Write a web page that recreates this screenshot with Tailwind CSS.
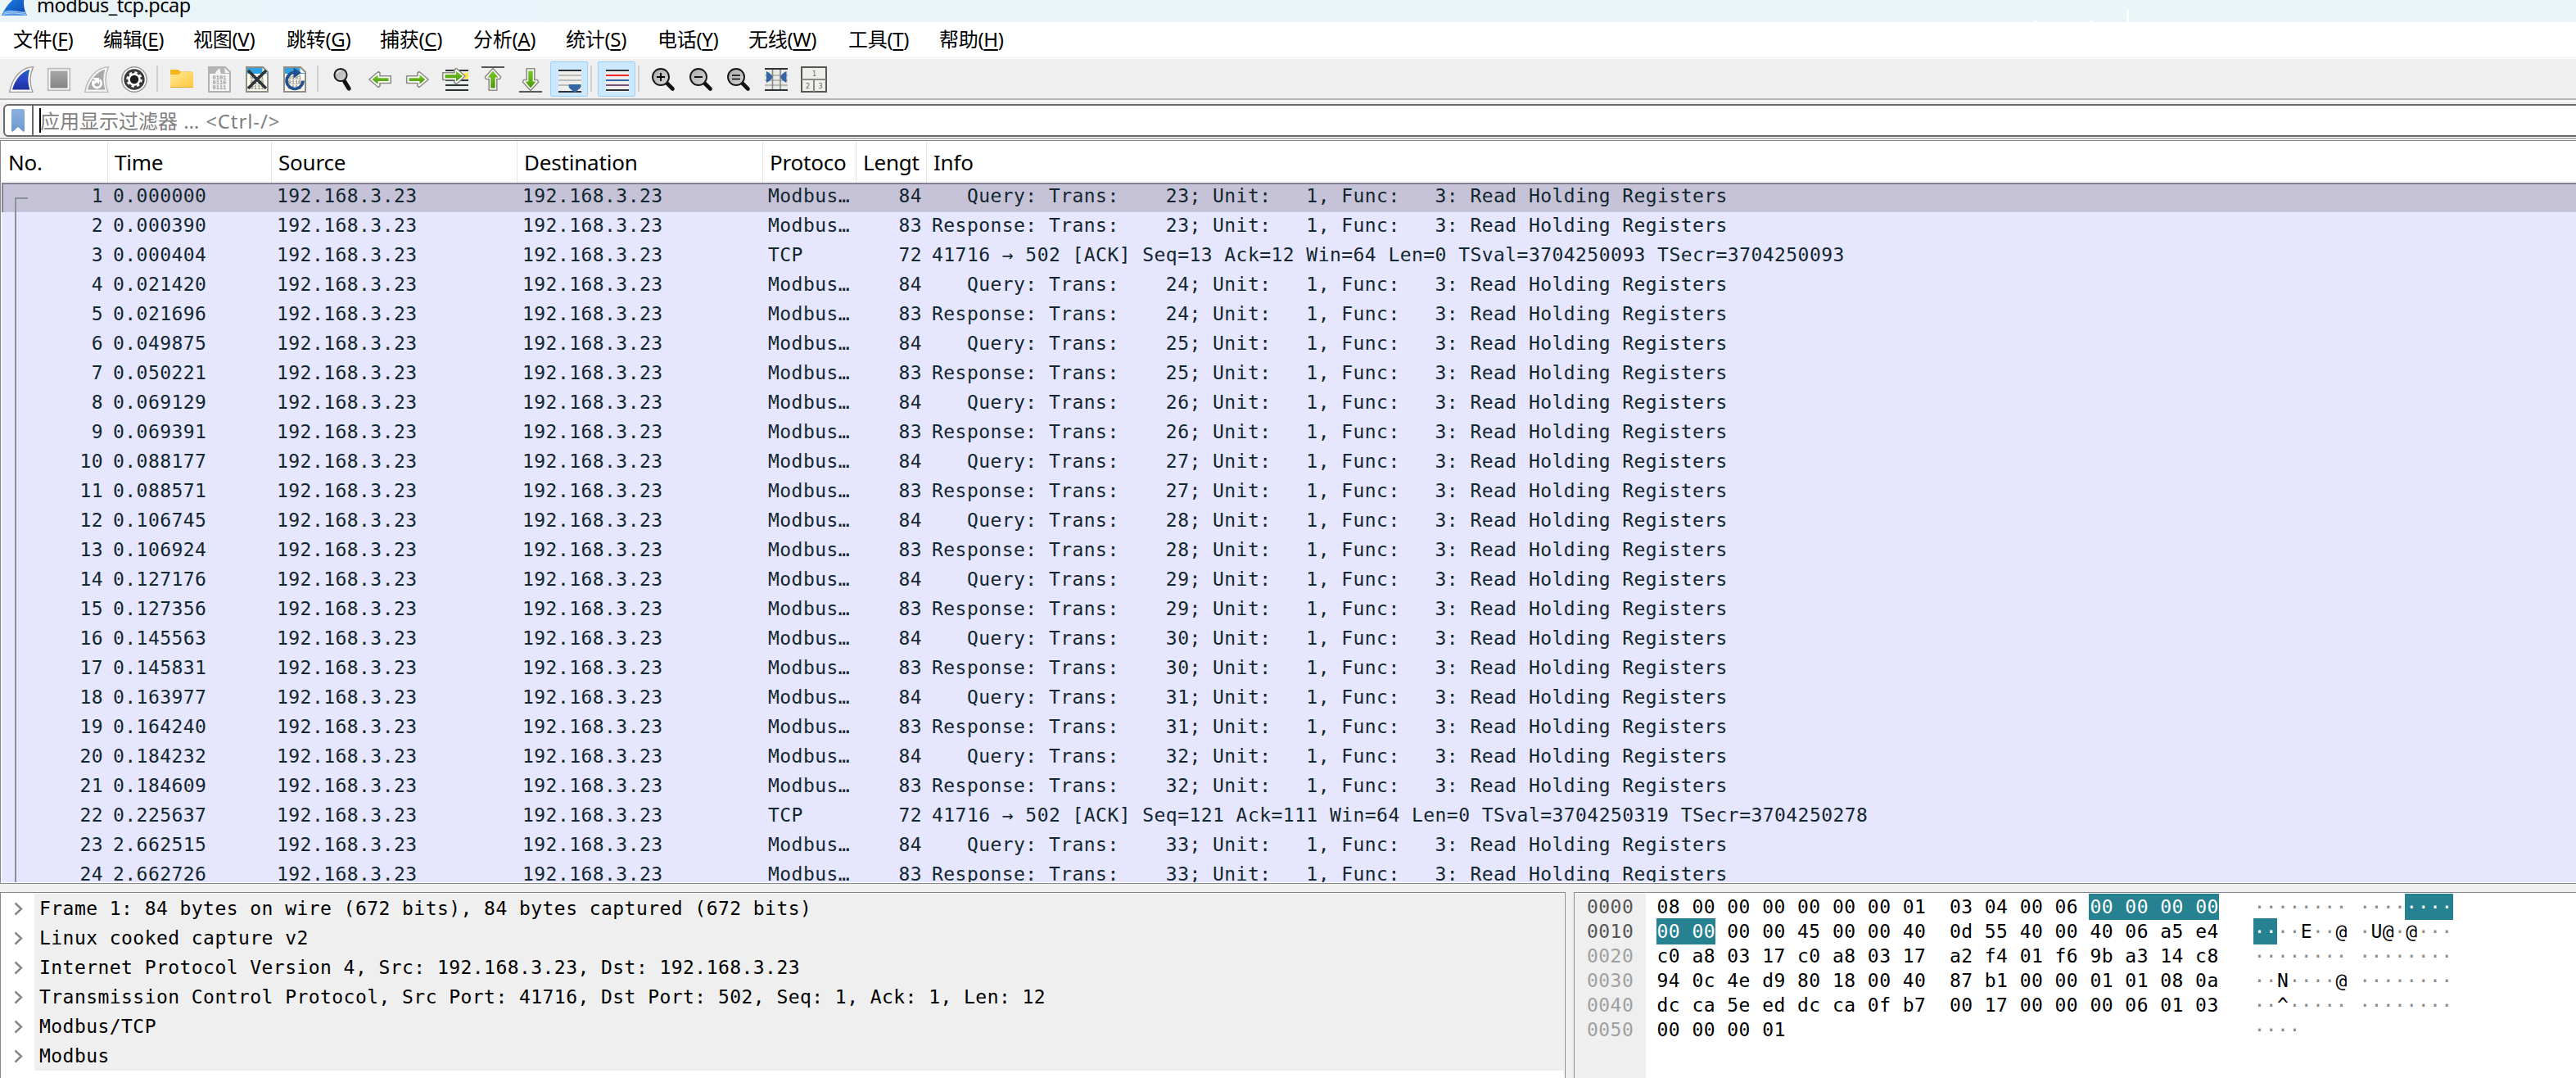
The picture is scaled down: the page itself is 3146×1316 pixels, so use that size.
<!DOCTYPE html>
<html lang="zh-CN">
<head>
<meta charset="utf-8">
<title>modbus_tcp.pcap</title>
<script src="https://cdn.jsdelivr.net/npm/@tailwindcss/browser@4"></script>
</head>
<body class="w-[3146px] h-[1316px] overflow-hidden bg-[#efefef] text-black flex flex-col font-['Noto_Sans','Noto_Sans_CJK_SC',sans-serif]">

<!-- Title bar -->
<header class="h-[27px] shrink-0 overflow-hidden bg-[linear-gradient(90deg,#eaf5f7_0,#eaf5f7_200px,#ebf3fc_430px,#ebf3fc_570px,#eaf5f7_760px)] flex items-start">
  <svg class="w-[45px] h-[27px] shrink-0" viewBox="0 0 45 27">
    <defs><linearGradient id="fin" x1="0" y1="0" x2="1" y2="1"><stop offset="0" stop-color="#1d8bea"/><stop offset="1" stop-color="#0b3fae"/></linearGradient></defs>
    <path d="M2 19C6 10 12 2 20-4H30C28 3 29 12 33 19Z" fill="url(#fin)"/>
    <path d="M5 14C14 10 22 16 31 14L33 19H2Z" fill="#4f93e6"/>
    <path d="M5 15.500Q15 12 31 16M4 17.500Q15 14 32 18" stroke="#b9d6f7" fill="none"/>
  </svg>
  <div class="text-[23.500px] leading-[34px] h-[34px] -mt-[11px] tracking-[-0.500px] whitespace-pre" id="title">modbus_tcp.pcap</div>
  <svg class="w-[130px] h-[27px] ml-auto mr-[536px]" viewBox="2480 0 130 27"><path d="M2597 12H2600V27H2597ZM2483 25H2488V27H2483ZM2551 25H2556V27H2551Z" fill="#fbffff"/></svg>
</header>

<!-- Menu -->
<nav id="menu" class="h-[43px] shrink-0 bg-white flex items-center pl-[16px] text-[24px] tracking-[-0.3px] leading-[41px] pb-[2px] font-['Noto_Sans','Noto_Sans_CJK_SC',sans-serif]"></nav>
<div class="h-[2px] shrink-0 bg-white border-t border-[#efefef]"></div>

<!-- Toolbar -->
<div class="h-[48px] shrink-0 flex pl-[3px]">
  <svg class="w-0 h-0" viewBox="0 0 1 1">
    <defs>
      <linearGradient id="blue" x1="0" y1="0" x2="0" y2="1"><stop offset="0" stop-color="#1f5fc0"/><stop offset=".5" stop-color="#2b45c4"/><stop offset="1" stop-color="#1d2f9c"/></linearGradient>
      <linearGradient id="grey" x1="0" y1="0" x2="0" y2="1"><stop offset="0" stop-color="#a6a6a6"/><stop offset="1" stop-color="#858585"/></linearGradient>
      <linearGradient id="lens" x1="0" y1="0" x2="1" y2="1"><stop offset="0" stop-color="#a9a9a9"/><stop offset="1" stop-color="#d8d8d8"/></linearGradient>
      <linearGradient id="green" x1="0" y1="0" x2="0" y2="1"><stop offset="0" stop-color="#7cc72c"/><stop offset="1" stop-color="#459a06"/></linearGradient>
      <linearGradient id="folder" x1="0" y1="0" x2="1" y2="1"><stop offset="0" stop-color="#ffe797"/><stop offset="1" stop-color="#ffc93c"/></linearGradient>
    </defs>
  </svg>
  <svg class="w-[46px] h-[48px]" viewBox="3 72 46 48">
    <path d="M11.700 112.400C15 94 27 82 40.500 81.600C35.500 93 36.500 104 40 112.400Z" fill="#fff" stroke="#9b9b9b" stroke-width="1.400"/>
    <path d="M15 109.500C18.500 96.500 26.500 87.500 36.300 84.700C33.500 94 34 102 36.500 109.500Z" fill="url(#blue)"/>
  </svg>
  <svg class="w-[46px] h-[48px]" viewBox="49 72 46 48">
    <rect x="58.700" y="83.700" width="26.600" height="26.600" fill="#f6f6f6" stroke="#b5b5b5" stroke-width="1.500"/>
    <rect x="61.500" y="86.500" width="21" height="21" fill="url(#grey)"/>
  </svg>
  <svg class="w-[46px] h-[48px]" viewBox="95 72 46 48">
    <path d="M103.700 112.400C107 94 119 82 132.500 81.600C127.500 93 128.500 104 132 112.400Z" fill="#f6f6f6" stroke="#b8b8b8" stroke-width="1.400"/>
    <path d="M107 109.500C110.500 96.500 118.500 87.500 128.300 84.700C125.500 94 126 102 128.500 109.500Z" fill="#a8a8a8"/>
    <path d="M114.500 98.500A5.200 5.200 0 1 0 121.500 97.500" fill="none" stroke="#fff" stroke-width="2.800"/>
    <path d="M113 95H121V103L118.500 100.500L115.500 103L113.500 101L116 98Z" fill="#fff"/>
  </svg>
  <svg class="w-[46px] h-[48px]" viewBox="141 72 46 48">
    <circle cx="164" cy="97" r="15.200" fill="#fff" stroke="#999" stroke-width="1.500"/>
    <circle cx="164" cy="97" r="12.700" fill="#3a3a3a"/>
    <circle cx="164" cy="97" r="6.500" fill="#1c1c1c" stroke="#fff" stroke-width="2.600"/>
    <circle cx="164" cy="97" r="8.500" fill="none" stroke="#fff" stroke-width="2.400" stroke-dasharray="3.400 3.276"/>
  </svg>
  <div class="w-[12px] flex items-center pl-[4px]"><div class="w-[2px] h-[32px] bg-[#cfcfcf]"></div></div>
  <svg class="w-[46px] h-[48px]" viewBox="199 72 46 48">
    <path d="M208 85.500Q208 85 209 85H217.500L220.500 87.500H234Q236 87.500 236 89V93H208Z" fill="#f4b617"/>
    <path d="M208 91H218L221.500 88H235Q236 88 236 89V106Q236 107 235 107H209Q208 107 208 106Z" fill="url(#folder)"/>
    <path d="M208 106.500H236" stroke="#e2a91e"/>
  </svg>
  <svg class="w-[46px] h-[48px] font-['Liberation_Mono',monospace]" viewBox="245 72 46 48">
    <path d="M255 82H275L281 88V112H255Z" fill="#f4f4f4" stroke="#b2b2b2" stroke-width="2"/>
    <path d="M256 83H274.500V89H280V90H256Z" fill="#b5b5b5"/><path d="M263 90Q264 85 269 83.500Q268 87 270 90Z" fill="#f4f4f4"/>
    <g fill="#9d9d9d" font-size="7" font-weight="700"><text x="259.500" y="97">0101</text><text x="259.500" y="103">0110</text><text x="259.500" y="109">0111</text></g>
  </svg>
  <svg class="w-[46px] h-[48px] font-['Liberation_Mono',monospace]" viewBox="291 72 46 48">
    <path d="M301 82H321L327 88V112H301Z" fill="#fdfdf0" stroke="#8f8f88" stroke-width="2"/>
    <path d="M302 83H320.500V89H326V90H302Z" fill="#2ea3e0"/>
    <g fill="#8a8a84" font-size="7" font-weight="700"><text x="305.500" y="97">0101</text><text x="305.500" y="103">0110</text><text x="305.500" y="109">0111</text></g>
    <path d="M303 86L325 108M325 86L303 108" stroke="#2c3437" stroke-width="3.600"/>
  </svg>
  <svg class="w-[46px] h-[48px] font-['Liberation_Mono',monospace]" viewBox="337 72 46 48">
    <path d="M347 82H367L373 88V112H347Z" fill="#fdfdf0" stroke="#8f8f88" stroke-width="2"/>
    <path d="M348 83H366.500V89H372V90H348Z" fill="#2ea3e0"/>
    <g fill="#8a8a84" font-size="7" font-weight="700"><text x="351.500" y="97">0101</text><text x="351.500" y="103">0110</text><text x="351.500" y="109">0111</text></g>
    <path d="M360 88.500A10 10 0 1 0 370 98.500" fill="none" stroke="#234f8e" stroke-width="3.600"/>
    <path d="M358.500 82.500L368 89L358.500 95.500Z" fill="#234f8e"/>
  </svg>
  <div class="w-[12px] flex items-center pl-[4px]"><div class="w-[2px] h-[32px] bg-[#cfcfcf]"></div></div>
  <svg class="w-[46px] h-[48px]" viewBox="395 72 46 48">
    <path d="M420.500 99L426 108" stroke="#111" stroke-width="5.200" stroke-linecap="round"/>
    <circle cx="416" cy="91.500" r="7.600" fill="url(#lens)" stroke="#1a1a1a" stroke-width="2"/>
    <path d="M411.500 90Q412.500 86.500 416.500 86.500" stroke="#eee" stroke-width="1.500" fill="none"/>
  </svg>
  <svg class="w-[46px] h-[48px]" viewBox="441 72 46 48">
    <path d="M450.800 97L462 87.500L464 89V92.700H477.300V101.500H464V105L462 106.500Z" fill="#fff" stroke="#8c8c86" stroke-width="1.600" stroke-linejoin="round"/>
    <path d="M454.500 97L461.500 91.300V95.200H474.500V99H461.500V102.700Z" fill="url(#green)"/>
  </svg>
  <svg class="w-[46px] h-[48px]" viewBox="487 72 46 48">
    <path d="M523.200 97L512 87.500L510 89V92.700H496.700V101.500H510V105L512 106.500Z" fill="#fff" stroke="#8c8c86" stroke-width="1.600" stroke-linejoin="round"/>
    <path d="M519.500 97L512.500 91.300V95.200H499.500V99H512.500V102.700Z" fill="url(#green)"/>
  </svg>
  <svg class="w-[46px] h-[48px]" viewBox="533 72 46 48">
    <rect x="544" y="87" width="28" height="23" fill="#e9efec"/>
    <rect x="562" y="89" width="10" height="7" fill="#fce94f"/>
    <path d="M544 86H572M544 98H572M544 104H572M544 110H572" stroke="#2e3436" stroke-width="2"/>
    <path d="M568 93L557.500 83.500L555 85V88.700H540.700V97.500H555V101L557.500 102.500Z" fill="#fff" stroke="#8c8c86" stroke-width="1.600" stroke-linejoin="round"/>
    <path d="M565 93L557 86.800V91H543.500V95.300H557V99.200Z" fill="url(#green)"/>
  </svg>
  <svg class="w-[46px] h-[48px]" viewBox="579 72 46 48">
    <path d="M588 82H616" stroke="#555753" stroke-width="2"/>
    <path d="M602 83.500L592.300 94L593.500 96.500H597.200V110.300H606.800V96.500H610.500L611.700 94Z" fill="#fff" stroke="#8c8c86" stroke-width="1.600" stroke-linejoin="round"/>
    <path d="M602 86.500L595.500 94.500H599.300V107.500H604.700V94.500H608.500Z" fill="url(#green)"/>
  </svg>
  <svg class="w-[46px] h-[48px]" viewBox="625 72 46 48">
    <path d="M634 112H662" stroke="#555753" stroke-width="2"/>
    <path d="M648 110.500L638.300 100L639.500 97.500H643.200V83.700H652.800V97.500H656.500L657.700 100Z" fill="#fff" stroke="#8c8c86" stroke-width="1.600" stroke-linejoin="round"/>
    <path d="M648 107.500L641.500 99.500H645.300V86.500H650.700V99.500H654.500Z" fill="url(#green)"/>
  </svg>
  <svg class="w-[47px] h-[48px]" viewBox="671 72 47 48">
    <rect x="672.500" y="75.500" width="45" height="42" rx="1.500" fill="#cce8ff" stroke="#99d1ff"/>
    <rect x="682" y="86" width="28" height="26" fill="#eeeeec"/>
    <path d="M682 92H710M682 98H710M682 104H710" stroke="#babdb6" stroke-width="2"/>
    <path d="M682 86H710M682 112H710" stroke="#2e3436" stroke-width="2"/>
    <path d="M695 103H709Q710.500 106 707.500 108.500L702 113L696.500 108.500Q693.500 106 695 103Z" fill="#3465a4"/>
  </svg>
  <div class="w-[12px] flex items-center pl-[3px]"><div class="w-[2px] h-[32px] bg-[#cfcfcf]"></div></div>
  <svg class="w-[46px] h-[48px]" viewBox="730 72 46 48">
    <rect x="730.500" y="75.500" width="45" height="42" rx="1.500" fill="#cce8ff" stroke="#99d1ff"/>
    <rect x="740" y="86" width="28" height="26" fill="#eeeeec"/>
    <path d="M740 86H768M740 110H768" stroke="#2e3436" stroke-width="2"/>
    <path d="M740 92H768" stroke="#ef2929" stroke-width="2"/><path d="M740 98H768" stroke="#3465a4" stroke-width="2"/><path d="M740 104H768" stroke="#75507b" stroke-width="2"/>
  </svg>
  <div class="w-[11px] flex items-center pl-[3px]"><div class="w-[2px] h-[32px] bg-[#cfcfcf]"></div></div>
  <svg class="w-[46px] h-[48px]" viewBox="787 72 46 48">
    <path d="M814 101L821.500 108.500" stroke="#111" stroke-width="4.600" stroke-linecap="round"/>
    <circle cx="807" cy="94" r="10" fill="url(#lens)" stroke="#151515" stroke-width="1.900"/>
    <path d="M802 94H812M807 89V99" stroke="#000" stroke-width="1.800"/>
  </svg>
  <svg class="w-[46px] h-[48px]" viewBox="833 72 46 48">
    <path d="M860 101L867.500 108.500" stroke="#111" stroke-width="4.600" stroke-linecap="round"/>
    <circle cx="853" cy="94" r="10" fill="url(#lens)" stroke="#151515" stroke-width="1.900"/>
    <path d="M848 94H858" stroke="#000" stroke-width="1.800"/>
  </svg>
  <svg class="w-[46px] h-[48px]" viewBox="879 72 46 48">
    <path d="M906 101L913.500 108.500" stroke="#111" stroke-width="4.600" stroke-linecap="round"/>
    <circle cx="899" cy="94" r="10" fill="url(#lens)" stroke="#151515" stroke-width="1.900"/>
    <path d="M894 92H904M894 96.500H904" stroke="#000" stroke-width="1.700"/>
  </svg>
  <svg class="w-[46px] h-[48px]" viewBox="925 72 46 48">
    <rect x="934" y="84" width="28" height="26" fill="#e9e9e6"/>
    <path d="M934 92H962M934 98H962M934 104H962" stroke="#babdb6" stroke-width="2"/>
    <path d="M934 84H962M934 110H962" stroke="#2e3436" stroke-width="2"/>
    <path d="M943.500 85V109M953 85V109" stroke="#888a85" stroke-width="1.600"/>
    <path d="M936 87Q942 90 943.500 94Q942 98 936 101ZM960.500 87Q954.500 90 953 94Q954.500 98 960.500 101Z" fill="#3465a4"/>
  </svg>
  <svg class="w-[46px] h-[48px] font-['DejaVu_Sans',sans-serif]" viewBox="971 72 46 48">
    <rect x="979" y="82" width="30" height="30" fill="#eeeeec" stroke="#555753" stroke-width="2"/>
    <path d="M979 97H1009M994 97V112" stroke="#888a85" stroke-width="2"/>
    <g fill="#666" font-size="8" text-anchor="middle"><text x="994.500" y="92.500">1</text><text x="986.500" y="108">2</text><text x="1002" y="108">3</text></g>
  </svg>
</div>
<div class="h-[4px] shrink-0 bg-[#efefef] border-t-2 border-[#b7b7b7]"><div class="h-[2px] border-b border-white"></div></div>

<!-- Display filter -->
<div class="h-[43px] shrink-0 pt-[3px] pl-[4px]">
  <div class="h-[40px] w-[3160px] bg-white border-2 border-[#696969] rounded-[6px] flex items-center">
    <div class="w-[33px] h-full border-r-2 border-[#696969] box-content flex items-center">
      <svg class="w-[16px] h-[28px] ml-[8px]" viewBox="0 0 16 28"><defs><linearGradient id="bm" x1="0" y1="0" x2="0" y2="1"><stop offset="0" stop-color="#8cb1db"/><stop offset="1" stop-color="#6a99cf"/></linearGradient></defs><path d="M0 1.500Q0 0 1.500 0H14.500Q16 0 16 1.500V27L14.500 28L8 22L1.500 28L0 27Z" fill="url(#bm)"/></svg>
    </div>
    <div class="ml-[7px] w-[2px] h-[30px] bg-black"></div>
    <div id="filter" class="-ml-[1px] text-[24px] leading-[36px] pt-px text-[#808080] whitespace-pre">应用显示过滤器<span class="tracking-[0.900px]"> … &lt;Ctrl-/&gt;</span></div>
  </div>
</div>
<div class="h-[4px] shrink-0 bg-white border-b border-white"><div class="mt-[1px] h-[2px] bg-[#b3b3b3]"></div></div>

<!-- Packet list -->
<section class="h-[908px] shrink-0 border-t border-b border-l border-[#828790] bg-white flex flex-col">
  <div id="head" class="h-[51px] shrink-0 flex text-[26px] leading-[52px] tracking-[-0.2px] overflow-hidden"></div>
  <div class="h-[854px] ml-px relative overflow-hidden bg-[#e6e6ff] font-['DejaVu_Sans_Mono',monospace] text-[23px] tracking-[0.445px] text-[#12272e]">
    <div id="rows"></div>
    <svg class="absolute left-0 top-0 w-[40px] h-[854px]" viewBox="2 223 40 854"><path d="M34 242H19V1077" fill="none" stroke="#8a9498" stroke-width="2"/></svg>
  </div>
</section>

<!-- Lower panes -->
<div class="h-[237px] mt-[10px] shrink-0 flex">
  <section class="w-[1912px] shrink-0 border border-b-0 border-[#828790] bg-white pt-[1px] pr-[1px]">
    <div id="tree" class="font-['DejaVu_Sans_Mono',monospace] text-[23px] tracking-[0.445px]"></div>
  </section>
  <section class="ml-[10px] grow border border-b-0 border-r-0 border-[#828790] bg-white pt-[1px] pl-[1px] flex font-['DejaVu_Sans_Mono',monospace] text-[23px] tracking-[0.449px] leading-[32px] whitespace-pre">
    <div id="offs" class="w-[86px] shrink-0 h-full bg-[#efefef] pl-[14px]"></div>
    <div id="hex" class="pl-[13.500px]"></div>
  </section>
</div>

<script>
const $ = id => document.getElementById(id);

$('menu').innerHTML = [['文件','F',110],['编辑','E',110],['视图','V',114],['跳转','G',114],['捕获','C',114],['分析','A',113],['统计','S',112],['电话','Y',111],['无线','W',122],['工具','T',111],['帮助','H',111]]
  .map(([t,k,w]) => `<div class="shrink-0 whitespace-nowrap" style="width:${w}px">${t}(<span class="underline decoration-2 underline-offset-[3px]">${k}</span>)</div>`).join('');

$('head').innerHTML = [['No.',131,9],['Time',200,8],['Source',300,8],['Destination',300,8],['Protoco',114,8],['Lengt',86,8],['Info',2100,8]]
  .map(([t,w,p]) => `<div class="shrink-0 border-r border-[#e5e5e5] whitespace-nowrap" style="width:${w}px;padding-left:${p}px">${t}</div>`).join('');

const times = '0.000000 0.000390 0.000404 0.021420 0.021696 0.049875 0.050221 0.069129 0.069391 0.088177 0.088571 0.106745 0.106924 0.127176 0.127356 0.145563 0.145831 0.163977 0.164240 0.184232 0.184609 0.225637 2.662515 2.662726'.split(' ');
const acks = {
  3: '41716 → 502 [ACK] Seq=13 Ack=12 Win=64 Len=0 TSval=3704250093 TSecr=3704250093',
  22: '41716 → 502 [ACK] Seq=121 Ack=111 Win=64 Len=0 TSval=3704250319 TSecr=3704250278'
};
let n = 0;
$('rows').innerHTML = times.map((t, i) => {
  const no = i + 1, ip = '192.168.3.23';
  let proto = 'Modbus…', len, info;
  if (acks[no]) { proto = 'TCP'; len = 72; info = acks[no]; }
  else {
    const q = n % 2 === 0, tr = 23 + (n >> 1); n++;
    len = q ? 84 : 83;
    info = (q ? '   Query:' : 'Response:') + ` Trans:    ${tr}; Unit:   1, Func:   3: Read Holding Registers`;
  }
  const cls = no === 1 ? 'bg-[#c6c3d9] shadow-[inset_2px_2px_0_#858195]' : '';
  return `<div class="h-[36px] leading-[32px] flex whitespace-pre ${cls}"><div class="w-[124px] text-right">${no}</div><div class="w-[200px] pl-[12px]">${t}</div><div class="w-[300px] pl-[12px]">${ip}</div><div class="w-[300px] pl-[12px]">${ip}</div><div class="w-[114px] pl-[12px]">${proto}</div><div class="w-[86px] text-right">${len}</div><div class="pl-[12px]">${info}</div></div>`;
}).join('');

$('tree').innerHTML = ['Frame 1: 84 bytes on wire (672 bits), 84 bytes captured (672 bits)','Linux cooked capture v2','Internet Protocol Version 4, Src: 192.168.3.23, Dst: 192.168.3.23','Transmission Control Protocol, Src Port: 41716, Dst Port: 502, Seq: 1, Ack: 1, Len: 12','Modbus/TCP','Modbus']
  .map(t => `<div class="h-[36px] leading-[37px] flex whitespace-pre"><svg class="w-[41px] h-[36px] shrink-0" viewBox="0 0 41 36"><path d="M17.500 11.500L25 18.500L17.500 25.500" fill="none" stroke="#858585" stroke-width="2.400"/></svg><div class="grow bg-[#efefef] pl-[6px]">${t}</div></div>`).join('');

$('offs').innerHTML = ['0000','0010','0020','0030','0040','0050'].map((o, i) => `<div class="h-[30px] ${i < 2 ? 'text-[#555555]' : 'text-[#a0a0a0]'}">${o}</div>`).join('');

const S = 'inline-block h-[32px] bg-[#268191] text-white pl-[1px] -ml-[1px]';
const asc = s => s.replace(/·+/g, m => `<span class="text-[#8c8c8c]">${m}</span>`);
$('hex').innerHTML = [
  [`08 00 00 00 00 00 00 01  03 04 00 06 <span class="${S}">00 00 00 00</span>`, asc('········ ····') + `<span class="${S}">····</span>`],
  [`<span class="${S}">00 00</span> 00 00 45 00 00 40  0d 55 40 00 40 06 a5 e4`, `<span class="${S}">··</span>` + asc('··E··@ ·U@·@···')],
  ['c0 a8 03 17 c0 a8 03 17  a2 f4 01 f6 9b a3 14 c8', asc('········ ········')],
  ['94 0c 4e d9 80 18 00 40  87 b1 00 00 01 01 08 0a', asc('··N····@ ········')],
  ['dc ca 5e ed dc ca 0f b7  00 17 00 00 00 06 01 03', asc('··^····· ········')],
  ['00 00 00 01', asc('····')]
].map(([h, a]) => `<div class="h-[30px] flex"><div class="w-[729px] shrink-0">${h}</div><div>${a}</div></div>`).join('');
</script>
</body>
</html>
